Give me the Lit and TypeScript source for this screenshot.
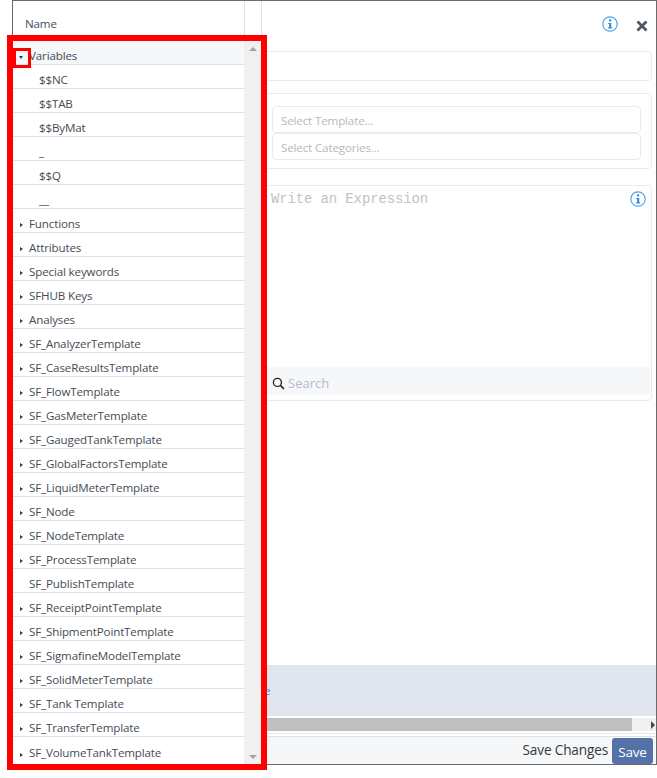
import { LitElement, html, css, svg } from "lit";
import { customElement } from "lit/decorators.js";

const rows: { t: string; k: "open" | "leaf" | "closed" | "none" }[] = [
  { t: "Variables", k: "open" },
  { t: "$$NC", k: "leaf" },
  { t: "$$TAB", k: "leaf" },
  { t: "$$ByMat", k: "leaf" },
  { t: "_", k: "leaf" },
  { t: "$$Q", k: "leaf" },
  { t: "__", k: "leaf" },
  ...[
    "Functions", "Attributes", "Special keywords", "SFHUB Keys", "Analyses",
    "SF_AnalyzerTemplate", "SF_CaseResultsTemplate", "SF_FlowTemplate", "SF_GasMeterTemplate",
    "SF_GaugedTankTemplate", "SF_GlobalFactorsTemplate", "SF_LiquidMeterTemplate", "SF_Node",
    "SF_NodeTemplate", "SF_ProcessTemplate",
  ].map((t) => ({ t, k: "closed" as const })),
  { t: "SF_PublishTemplate", k: "none" },
  ...[
    "SF_ReceiptPointTemplate", "SF_ShipmentPointTemplate", "SF_SigmafineModelTemplate",
    "SF_SolidMeterTemplate", "SF_Tank Template", "SF_TransferTemplate", "SF_VolumeTankTemplate",
  ].map((t) => ({ t, k: "closed" as const })),
];

const info = svg`<svg class="info" viewBox="0 0 16 16" width="16" height="16"><circle cx="8" cy="8" r="7.2" fill="none" stroke="#4da3f0" stroke-width="1.2"/><rect x="7" y="3.4" width="2.2" height="2" fill="#2f86d6"/><path d="M6.2 6.9h3v4.4h1v1.2H6.2v-1.2h1V8.1h-1z" fill="#2f86d6"/></svg>`;

@customElement("app-root")
export class AppRoot extends LitElement {
  static styles = css`
    :host {
      display: block;
      position: relative;
      width: 657px;
      height: 778px;
      background: #fff;
      font-family: "Open Sans", "Noto Sans", sans-serif;
      font-size: 11.6px;
      letter-spacing: -0.15px;
      color: #454c54;
      overflow: hidden;
    }
    .modal {
      box-sizing: border-box;
      margin-left: 12px;
      width: 645px;
      height: 765px;
      border: 1px solid #6c6c6c;
      display: flex;
      background: #fff;
    }
    .left {
      width: 249px;
      flex: none;
      display: flex;
      flex-direction: column;
    }
    .head {
      height: 40px;
      flex: none;
      display: flex;
      box-sizing: border-box;
    }
    .name {
      width: 232px;
      box-sizing: border-box;
      padding: 15px 0 0 12px;
      border-right: 1px solid #dee2e6;
      line-height: 16px;
    }
    .head-gap {
      flex: 1;
      border-right: 1px solid #dee2e6;
    }
    .tree {
      flex: 1;
      display: flex;
      min-height: 0;
    }
    .list {
      width: 231px;
      flex: none;
    }
    .row {
      box-sizing: border-box;
      height: 24px;
      border-bottom: 1px solid #dee2e6;
      display: flex;
      align-items: center;
      padding-top: 6px;
      line-height: 16px;
      white-space: nowrap;
    }
    .row:first-child {
      background: #f6f7f9;
    }
    .row:last-child {
      height: 27px;
      border-bottom: none;
      padding-top: 5px;
    }
    .row.leaf {
      padding-left: 26px;
    }
    .row.none {
      padding-left: 16px;
    }
    .tog {
      width: 16px;
      flex: none;
      display: flex;
      justify-content: center;
      padding-top: 3px;
    }
    .tri-r {
      border-left: 3.5px solid #343a40;
      border-top: 2.5px solid transparent;
      border-bottom: 2.5px solid transparent;
      margin-left: 1px;
    }
    .tri-d {
      border-top: 3.5px solid #343a40;
      border-left: 2.5px solid transparent;
      border-right: 2.5px solid transparent;
    }
    .vbar {
      flex: 1;
      background: #f0f0f0;
      display: flex;
      flex-direction: column;
      justify-content: space-between;
      align-items: center;
      padding: 6px 0 5px;
    }
    .bar-up {
      border-bottom: 4px solid #a3a3a3;
      border-left: 4px solid transparent;
      border-right: 4px solid transparent;
    }
    .bar-down {
      border-top: 4px solid #a3a3a3;
      border-left: 4px solid transparent;
      border-right: 4px solid transparent;
    }
    .right {
      flex: 1;
      min-width: 0;
      display: flex;
      flex-direction: column;
    }
    .top {
      height: 50px;
      flex: none;
      display: flex;
      align-items: center;
      justify-content: flex-end;
      padding-right: 8px;
      box-sizing: border-box;
      gap: 18px;
      padding-bottom: 4px;
    }
    .close {
      width: 12px;
      height: 12px;
      margin-top: 3px;
    }
    .box {
      border: 1px solid #e9ecef;
      border-radius: 4px;
      margin: 0 4px 0 1px;
      box-sizing: border-box;
    }
    .b1 {
      height: 30px;
      margin-bottom: 12px;
    }
    .b2 {
      height: 76px;
      padding: 12px 10px 0 8px;
      margin-bottom: 16px;
    }
    .sel {
      box-sizing: border-box;
      height: 27px;
      border: 1px solid #e9ecef;
      border-radius: 4px;
      padding: 2px 8px 0;
      display: flex;
      align-items: center;
      color: #b5b9c0;
      line-height: 16px;
    }
    .b3 {
      height: 216px;
      display: flex;
      flex-direction: column;
    }
    .edit {
      flex: 1;
      display: flex;
      justify-content: space-between;
      padding: 5px 5px 0 7px;
    }
    .edit span {
      font-family: "Liberation Mono", monospace;
      font-size: 14px;
      line-height: 16px;
      color: #c2c2c2;
      letter-spacing: -0.14px;
    }
    .search {
      height: 28px;
      margin: 0 1px 5px 0;
      background: #f6f7f9;
      border-radius: 3px;
      display: flex;
      align-items: center;
      padding: 4px 0 0 8px;
      box-sizing: border-box;
      gap: 3px;
      font-size: 13px;
      letter-spacing: 0;
      color: #b4bccb;
    }
    .spacer {
      flex: 1;
    }
    .band {
      height: 51px;
      flex: none;
      background: #e1e5ed;
      box-sizing: border-box;
      padding: 18px 0 0 2px;
      line-height: 16px;
      color: #3b8ad8;
    }
    .hbar {
      height: 13px;
      margin: 2px 0;
      flex: none;
      background: #f0f0f0;
      display: flex;
      align-items: center;
    }
    .thumb {
      width: 370px;
      height: 13px;
      background: #bfbfbf;
    }
    .hbar i {
      margin-left: auto;
      margin-right: 1px;
      border-left: 4px solid #444;
      border-top: 4px solid transparent;
      border-bottom: 4px solid transparent;
    }
    .foot-wrap {
      flex: none;
      border-top: 1px solid #e3e6ea;
      padding-top: 2px;
    }
    .foot {
      height: 28px;
      box-sizing: border-box;
      background: #f6f7f9;
      border-top: 1px solid #dee2e6;
      display: flex;
      justify-content: flex-end;
      align-items: flex-end;
      padding-right: 3px;
      gap: 4px;
    }
    .foot span {
      font-size: 13.6px;
      line-height: 20px;
      color: #343a40;
      padding-bottom: 4px;
    }
    .save {
      height: 26px;
      width: 41px;
      background: #5471a8;
      border-radius: 3px;
      color: #fff;
      font-size: 13.5px;
      line-height: 26px;
      text-align: center;
      padding-top: 1px;
      box-sizing: border-box;
    }
    .frame {
      position: absolute;
      left: 7px;
      top: 35px;
      width: 260px;
      height: 735px;
      box-sizing: border-box;
      border: 6px solid #ff0000;
      pointer-events: none;
    }
    .mini {
      position: absolute;
      left: 13px;
      top: 48px;
      width: 18px;
      height: 20px;
      box-sizing: border-box;
      border: 3px solid #ff0000;
      pointer-events: none;
    }
  `;

  render() {
    return html`
      <div class="modal">
        <div class="left">
          <div class="head"><div class="name">Name</div><div class="head-gap"></div></div>
          <div class="tree">
            <div class="list">
              ${rows.map(
                (r) => html`<div class="row ${r.k}">
                  ${r.k === "open" ? html`<span class="tog"><i class="tri-d"></i></span>` : ""}
                  ${r.k === "closed" ? html`<span class="tog"><i class="tri-r"></i></span>` : ""}
                  <span>${r.t}</span>
                </div>`
              )}
            </div>
            <div class="vbar"><i class="bar-up"></i><i class="bar-down"></i></div>
          </div>
        </div>
        <div class="right">
          <div class="top">
            ${info}
            <svg class="close" viewBox="0 0 12 12"><path d="M1.5 1.5l9 9M10.5 1.5l-9 9" stroke="#4b5563" stroke-width="2.8" fill="none"/></svg>
          </div>
          <div class="box b1"></div>
          <div class="box b2">
            <div class="sel">Select Template...</div>
            <div class="sel">Select Categories...</div>
          </div>
          <div class="box b3">
            <div class="edit"><span>Write an Expression</span>${info}</div>
            <div class="search">
              <svg viewBox="0 0 13 13" width="13" height="13"><circle cx="5.4" cy="5.4" r="4" fill="none" stroke="#222" stroke-width="1.3"/><path d="M8.4 8.4l3.6 3.6" stroke="#222" stroke-width="1.6"/></svg>
              <span>Search</span>
            </div>
          </div>
          <div class="spacer"></div>
          <div class="band">e</div>
          <div class="hbar"><div class="thumb"></div><i></i></div>
          <div class="foot-wrap"><div class="foot"><span>Save Changes</span><div class="save">Save</div></div></div>
        </div>
      </div>
      <div class="frame"></div>
      <div class="mini"></div>
    `;
  }
}
